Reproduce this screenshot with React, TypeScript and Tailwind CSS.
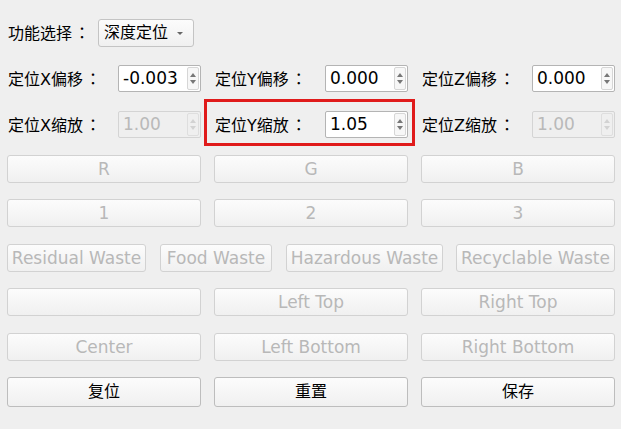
const font = { fontFamily: '"DejaVu Sans", "Noto Sans CJK SC", sans-serif' };
const colonFont = { fontFamily: '"Noto Sans CJK TC", sans-serif' };

function Label({ text }: { text: string }) {
  // 冒号居中显示（TC 字形）
  return (
    <>
      {text}
      <span style={colonFont} className="ml-[2px]">：</span>
    </>
  );
}

function Spin({ value, disabled = false }: { value: string; disabled?: boolean }) {
  return (
    <div
      className={`flex flex-1 h-[27px] rounded-[2px] border ${
        disabled ? "border-[#d4d4d4] bg-[#efefef] text-[#b9b9b9]" : "border-[#b4b4b4] bg-white text-black"
      }`}
    >
      <div className="flex-1 flex items-center pl-[4px] text-[17px] leading-none">{value}</div>
      <div
        className={`w-[12px] my-[1px] mr-[1px] flex flex-col items-center justify-center gap-[3px] rounded-[2px] border ${
          disabled ? "border-[#dedede]" : "border-[#d6d6d6] bg-[#f7f7f7]"
        }`}
      >
        <div
          className={`w-0 h-0 border-x-[3px] border-x-transparent border-b-[4px] ${
            disabled ? "border-b-[#d2d2d2]" : "border-b-[#777]"
          }`}
        />
        <div
          className={`w-0 h-0 border-x-[3px] border-x-transparent border-t-[4px] ${
            disabled ? "border-t-[#d2d2d2]" : "border-t-[#777]"
          }`}
        />
      </div>
    </div>
  );
}

function Field({ label, value, disabled }: { label: string; value: string; disabled?: boolean }) {
  return (
    <div className="flex items-center">
      <div className="w-[111px] pl-[1px] text-[16px] text-black whitespace-nowrap">
        <Label text={label} />
      </div>
      <Spin value={value} disabled={disabled} />
    </div>
  );
}

function Btn({ label, disabled = true, className = "" }: { label: string; disabled?: boolean; className?: string }) {
  return (
    <button
      className={`h-full rounded-[3px] border bg-gradient-to-b from-[#fcfcfc] to-[#f0f0f0] leading-none whitespace-nowrap ${
        disabled ? "border-[#d2d2d2] text-[#b8b8b8] text-[17px]" : "border-[#bdbdbd] text-black text-[16px]"
      } ${className}`}
    >
      {label}
    </button>
  );
}

function Row3({ labels, disabled = true, className = "" }: { labels: string[]; disabled?: boolean; className?: string }) {
  return (
    <div className={`grid grid-cols-3 gap-x-[13px] h-[28px] ${className}`}>
      {labels.map((l, i) => (
        <Btn key={i} label={l} disabled={disabled} />
      ))}
    </div>
  );
}

export default function App() {
  return (
    <div style={font} className="w-[621px] h-[429px] bg-[#efefef] pl-[7px] pr-[6px] pt-[19px] overflow-hidden">
      <div className="flex items-center h-[28px]">
        <div className="w-[91px] pl-[1px] text-[16px] text-black whitespace-nowrap">
          <Label text="功能选择" />
        </div>
        <div className="flex items-center h-[28px] w-[96px] rounded-[3px] border border-[#c4c4c4] bg-gradient-to-b from-[#fcfcfc] to-[#f0f0f0] pl-[5px] text-[16px] text-black">
          <span>深度定位</span>
          <div className="ml-[9px] w-0 h-0 border-x-[3px] border-x-transparent border-t-[3px] border-t-[#666]" />
        </div>
      </div>

      <div className="grid grid-cols-3 gap-x-[13px] mt-[18px] h-[27px]">
        <Field label="定位X偏移" value="-0.003" />
        <Field label="定位Y偏移" value="0.000" />
        <Field label="定位Z偏移" value="0.000" />
      </div>

      <div className="grid grid-cols-3 gap-x-[13px] mt-[19px] h-[27px]">
        <Field label="定位X缩放" value="1.00" disabled />
        <div className="relative">
          <Field label="定位Y缩放" value="1.05" />
          <div className="absolute left-[-10px] right-[-7px] top-[-12px] bottom-[-8px] border-[3px] border-[#e01b1b] pointer-events-none" />
        </div>
        <Field label="定位Z缩放" value="1.00" disabled />
      </div>

      <Row3 labels={["R", "G", "B"]} className="mt-[17px]" />
      <Row3 labels={["1", "2", "3"]} className="mt-[16px]" />

      <div className="flex h-[28px] mt-[17px]">
        <Btn label="Residual Waste" className="w-[139px]" />
        <Btn label="Food Waste" className="w-[112px] ml-[14px]" />
        <Btn label="Hazardous Waste" className="w-[157px] ml-[14px]" />
        <Btn label="Recyclable Waste" className="flex-1 ml-[13px]" />
      </div>

      <Row3 labels={["", "Left Top", "Right Top"]} className="mt-[16px]" />
      <Row3 labels={["Center", "Left Bottom", "Right Bottom"]} className="mt-[17px]" />
      <div className="grid grid-cols-3 gap-x-[13px] h-[30px] mt-[16px]">
        <Btn label="复位" disabled={false} />
        <Btn label="重置" disabled={false} />
        <Btn label="保存" disabled={false} />
      </div>
    </div>
  );
}
